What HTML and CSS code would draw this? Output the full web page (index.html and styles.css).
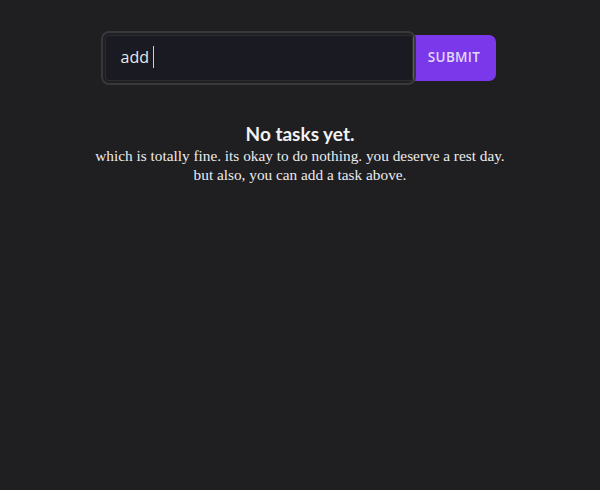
FILE: index.html
```html
<!DOCTYPE html>
<html>
<head>
<meta charset="utf-8">
<link rel="stylesheet" href="styles.css">
</head>
<body>
<main class="app">
  <form class="task-form">
    <div class="input-ring">
      <div class="task-input">add<span class="caret"></span></div>
    </div>
    <button type="button" class="submit">SUBMIT</button>
  </form>
  <section class="empty">
    <h2 class="empty-title">No tasks yet.</h2>
    <p class="empty-text">which is totally fine. its okay to do nothing. you deserve a rest day.<br>but also, you can add a task above.</p>
  </section>
</main>
</body>
</html>
```
FILE: styles.css
```css
html, body {
  margin: 0;
  padding: 0;
  background: #1f1e21;
  height: 100%;
}
.app {
  display: flex;
  flex-direction: column;
  align-items: center;
  padding-top: 35px;
}
.task-form {
  display: flex;
  align-items: stretch;
  margin: 0;
}
.input-ring {
  width: 308px;
  height: 46px;
  box-sizing: border-box;
  position: relative;
}
.input-ring::before {
  content: "";
  position: absolute;
  left: -4px; top: -4px; right: -3px; bottom: -4px;
  border: 2px solid #38383b;
  border-radius: 8px;
  pointer-events: none;
}
.task-input {
  box-sizing: border-box;
  height: 100%;
  background: #1a1b22;
  border: 1px solid #2c2c31;
  border-radius: 4px 0 0 4px;
  display: flex;
  align-items: center;
  padding-left: 15px;
  padding-bottom: 3px;
  font-family: "Open Sans", sans-serif;
  font-size: 16px;
  color: #e8e8ea;
}
.caret {
  display: inline-block;
  width: 1px;
  height: 22px;
  background: #cfcfd2;
  margin-left: 4px;
}
.submit {
  width: 83px;
  height: 46px;
  border: none;
  background: #7b38ea;
  color: #e2d8f8;
  font-family: "Open Sans", sans-serif;
  font-weight: 600;
  font-size: 13.5px;
  letter-spacing: 0.3px;
  border-radius: 0 7px 7px 0;
  padding: 0 0 2px;
}
.empty {
  margin-top: 41px;
  text-align: center;
}
.empty-title {
  margin: 0;
  font-family: "Lato", sans-serif;
  font-weight: 700;
  font-size: 19px;
  color: #f2f2f3;
  line-height: 24px;
}
.empty-text {
  margin: 0;
  font-family: "Liberation Serif", serif;
  font-size: 15.3px;
  line-height: 19px;
  color: #ececee;
}
```
